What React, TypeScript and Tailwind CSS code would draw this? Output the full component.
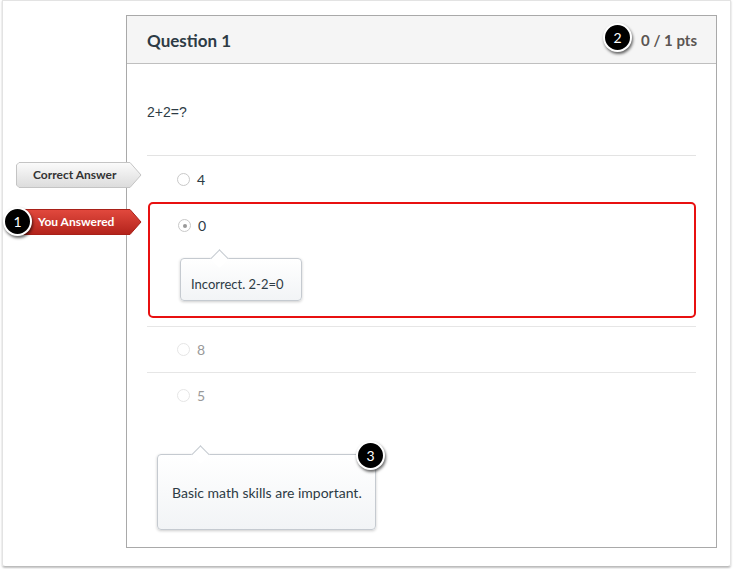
import React from "react";

function Badge({ n, className }: { n: number; className: string }) {
  return (
    <div
      className={`absolute flex h-[29px] w-[29px] items-center justify-center rounded-full border-2 border-white bg-black text-[14px] text-white shadow-[1px_2px_3px_rgba(0,0,0,0.6)] ${className}`}
    >
      {n}
    </div>
  );
}

function Tag({
  label,
  tone,
  className,
}: {
  label: string;
  tone: "gray" | "red";
  className: string;
}) {
  const id = tone === "gray" ? "g-gray" : "g-red";
  return (
    <div className={`absolute h-[26px] w-[126px] ${className}`}>
      <svg width="126" height="26" className="absolute left-0 top-0">
        <defs>
          <linearGradient id={id} x1="0" y1="0" x2="0" y2="1">
            {tone === "gray" ? (
              <>
                <stop offset="0" stopColor="#fbfbfb" />
                <stop offset="1" stopColor="#dcdcdc" />
              </>
            ) : (
              <>
                <stop offset="0" stopColor="#e2493e" />
                <stop offset="1" stopColor="#b3231b" />
              </>
            )}
          </linearGradient>
        </defs>
        <polygon
          points="3,0.5 114,0.5 125,13 114,25.5 3,25.5 0.5,23 0.5,3"
          fill={`url(#${id})`}
          stroke={tone === "gray" ? "#c4c4c4" : "#a82018"}
          strokeWidth="1"
        />
      </svg>
      <div
        className={`relative flex h-full items-center text-[12px] font-bold ${
          tone === "gray" ? "pl-[17px] text-[#333]" : "pl-[22px] text-white"
        }`}
      >
        {label}
      </div>
    </div>
  );
}

function Radio({ checked, faded }: { checked?: boolean; faded?: boolean }) {
  return (
    <span
      className={`flex h-[13px] w-[13px] items-center justify-center rounded-full border bg-white ${
        faded ? "border-[#e6e6e6]" : "border-[#c9c9c9]"
      }`}
    >
      {checked && <span className="h-[4px] w-[4px] rounded-full bg-[#999]" />}
    </span>
  );
}

function Answer({
  value,
  faded,
  checked,
}: {
  value: string;
  faded?: boolean;
  checked?: boolean;
}) {
  return (
    <div className="flex items-center gap-[7px]">
      <Radio checked={checked} faded={faded} />
      <span className={`text-[14px] ${faded ? "text-[#999]" : "text-[#2d3b45]"}`}>
        {value}
      </span>
    </div>
  );
}

function Bubble({
  text,
  className,
  arrowLeft,
}: {
  text: string;
  className: string;
  arrowLeft: string;
}) {
  return (
    <div
      className={`relative rounded-[4px] border border-[#c5cad0] bg-gradient-to-b from-white to-[#f2f4f6] text-[#2d3b45] shadow-[0_1px_3px_rgba(0,0,0,0.2)] ${className}`}
    >
      <span
        className={`absolute top-[-7px] h-[13px] w-[13px] rotate-45 border-l border-t border-[#c5cad0] bg-white ${arrowLeft}`}
      />
      <span className="relative">{text}</span>
    </div>
  );
}

export default function App() {
  return (
    <div className="relative h-[569px] w-[734px] bg-white font-['Lato',sans-serif]">
      <div className="ml-[2px] h-[567px] w-[729px] rounded-b-[3px] border-l border-r border-t border-[#e3e3e3] border-b-[#bdbdbd] border-b pl-[123px] pt-[14px] shadow-[0_1px_2px_rgba(0,0,0,0.25)]">
        <div className="h-[533px] w-[591px] border border-[#a9a9a9] bg-white">
          <div className="flex h-[48px] items-center justify-between border-b border-[#bfbfbf] bg-[#f5f5f5] pl-[20px] pr-[19px] pt-[2px]">
            <span className="text-[17px] font-bold text-[#2d3b45]">Question 1</span>
            <span className="text-[15px] font-bold text-[#5b5552]">0 / 1 pts</span>
          </div>
          <div className="px-[20px]">
            <div className="flex h-[92px] items-center border-b border-[#e3e3e3] pt-[6px] font-['Liberation_Sans',sans-serif] text-[14px] text-[#2d3b45]">
              2+2=?
            </div>
            <div className="flex h-[46px] items-center pl-[30px]">
              <Answer value="4" />
            </div>
            <div className="ml-[1px] h-[116px] rounded-[5px] border-2 border-[#e81010] pl-[28px] pt-[11px]">
              <Answer value="0" checked />
              <Bubble
                text="Incorrect. 2-2=0"
                className="ml-[2px] mt-[22px] flex h-[43px] w-[122px] items-end pb-[6px] pl-[10px] text-[13px]"
                arrowLeft="left-[32px]"
              />
            </div>
            <div className="mt-[8px] flex h-[46px] items-center border-t border-[#e6e6e6] pl-[30px]">
              <Answer value="8" faded />
            </div>
            <div className="flex h-[46px] items-center border-t border-[#e6e6e6] pl-[30px]">
              <Answer value="5" faded />
            </div>
            <Bubble
              text="Basic math skills are important."
              className="ml-[10px] mt-[36px] flex h-[76px] w-[219px] items-center pl-[14px] text-[14px]"
              arrowLeft="left-[36px]"
            />
          </div>
        </div>
      </div>

      <Tag label="Correct Answer" tone="gray" className="left-[16px] top-[162px]" />
      <Tag label="You Answered" tone="red" className="left-[16px] top-[209px]" />
      <Badge n={1} className="left-[3px] top-[207px]" />
      <Badge n={2} className="left-[603px] top-[23px]" />
      <Badge n={3} className="left-[356px] top-[441px]" />
    </div>
  );
}
